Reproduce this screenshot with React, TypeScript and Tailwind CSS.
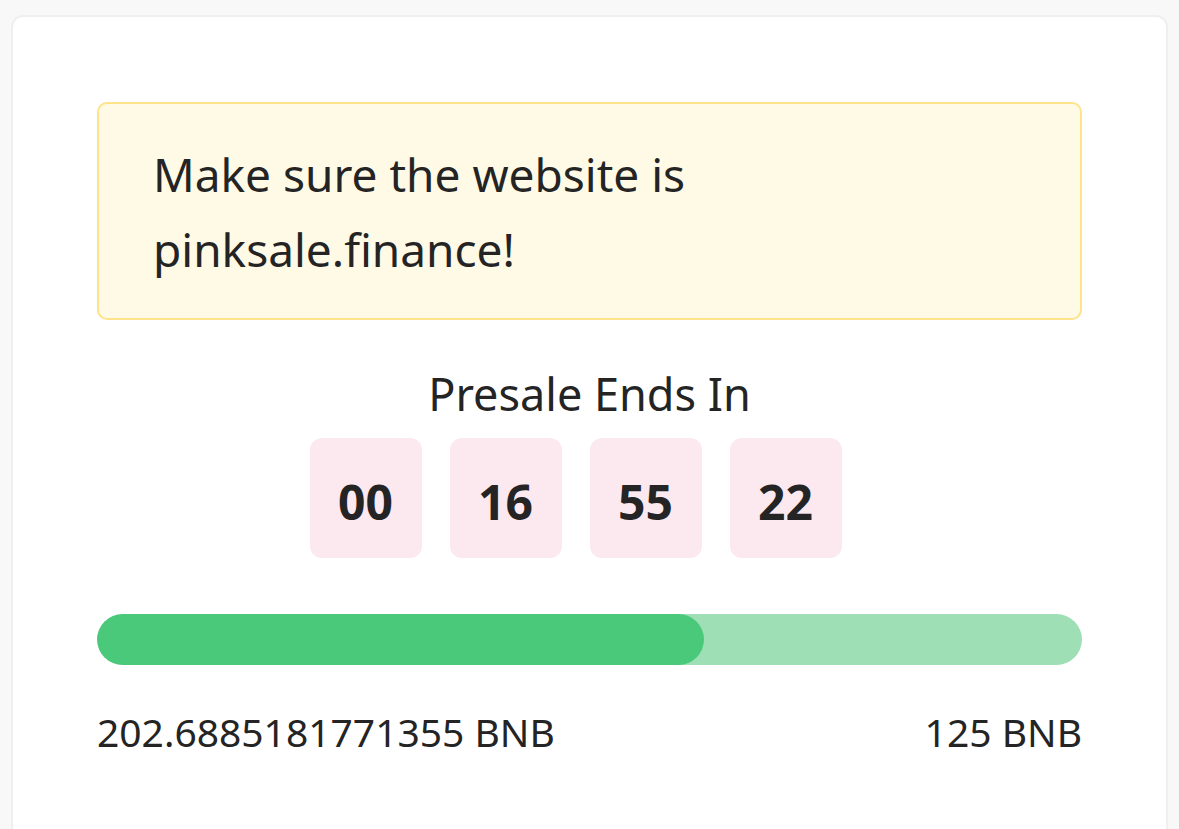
import React from "react";

export default function App() {
  const units = ["00", "16", "55", "22"];
  const pct = 61.6;
  return (
    <div className="min-h-screen bg-[#f8f8f8] px-[11px] pt-[15px] text-[#242424] [font-family:'Noto_Sans',sans-serif]">
      <div className="rounded-[12px] border-2 border-[#efefef] bg-white px-[84px] pt-[85px] pb-[80px]">
        <div className="rounded-[10px] border-2 border-[#fee38b] bg-[#fffae6] pt-[33px] pb-[31px] pl-[54px] pr-[40px] text-[46px] leading-[75px]">
          Make sure the website is pinksale.finance!
        </div>
        <div className="mt-[44px] text-center text-[45px] leading-[59px]">Presale Ends In</div>
        <div className="mt-[15px] flex justify-center">
          {units.map((u, i) => (
            <div
              key={i}
              className="mr-[28px] flex h-[120px] w-[112px] items-center justify-center rounded-[12px] bg-[#fce8ef] pt-[8px] text-[48px] font-bold"
            >
              {u}
            </div>
          ))}
        </div>
        <div className="mt-[56px] h-[51px] w-full overflow-hidden rounded-full bg-[#9fdfb5]">
          <div className="h-full rounded-full bg-[#4ac97a]" style={{ width: `${pct}%` }} />
        </div>
        <div className="mt-[38px] flex justify-between text-[39px] leading-[58px]">
          <span>202.6885181771355 BNB</span>
          <span>125 BNB</span>
        </div>
      </div>
    </div>
  );
}
